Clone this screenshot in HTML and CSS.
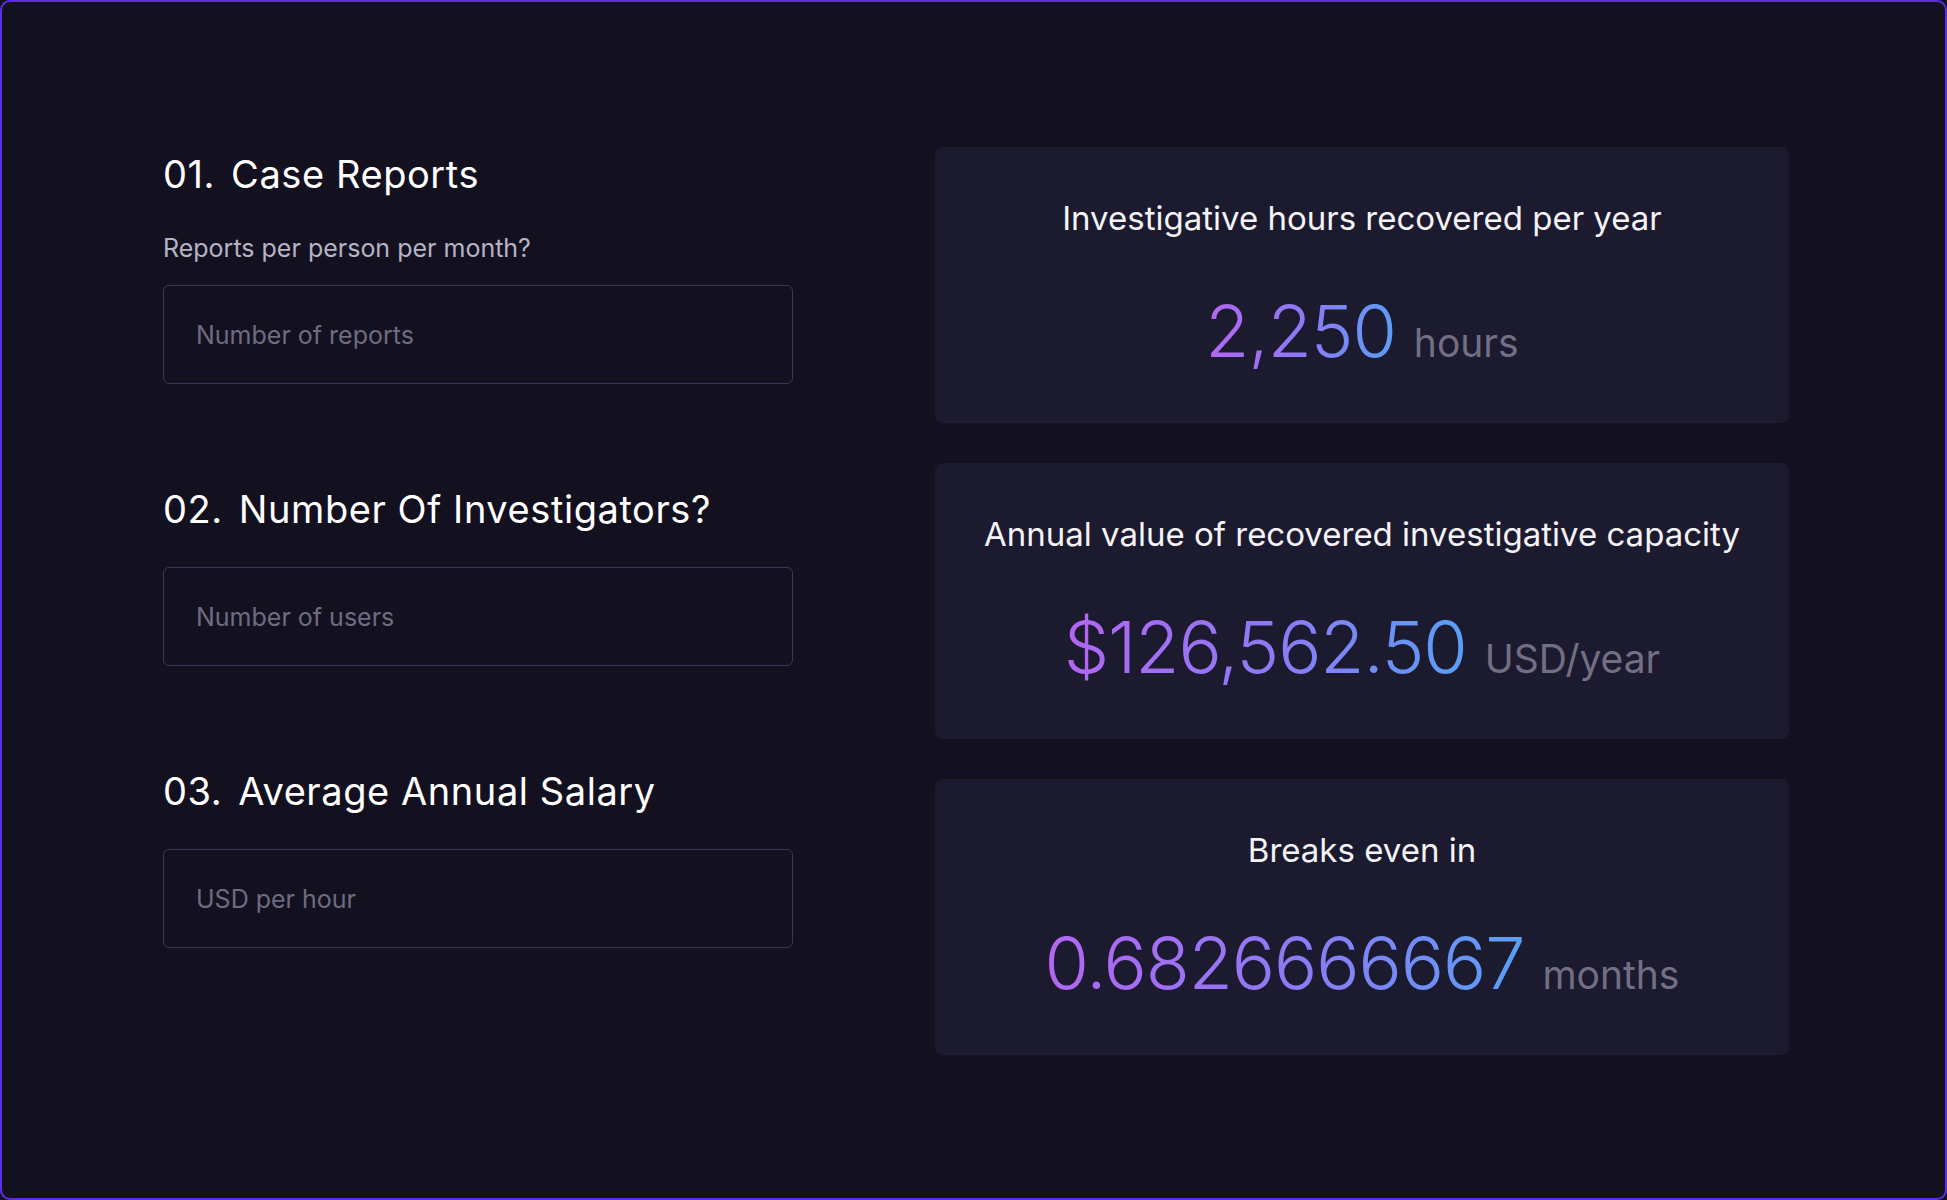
FILE: index.html
```html
<!DOCTYPE html>
<html lang="en">
<head>
    <meta charset="UTF-8">
    <meta name="viewport" content="width=device-width, initial-scale=1.0">
    <title>ROI Calculator</title>
    <link rel="stylesheet" href="styles.css">
</head>
<body>
    <div class="frame">
        <div class="calculator">
            <div class="inputs">
                <div class="field">
                    <h2 class="field-title"><span class="num">01.</span>Case Reports</h2>
                    <p class="field-hint">Reports per person per month?</p>
                    <input type="text" class="field-input" placeholder="Number of reports">
                </div>
                <div class="field">
                    <h2 class="field-title"><span class="num">02.</span>Number Of Investigators?</h2>
                    <input type="text" class="field-input" placeholder="Number of users">
                </div>
                <div class="field">
                    <h2 class="field-title"><span class="num">03.</span>Average Annual Salary</h2>
                    <input type="text" class="field-input" placeholder="USD per hour">
                </div>
            </div>

            <div class="results">
                <div class="card">
                    <p class="card-title">Investigative hours recovered per year</p>
                    <p class="card-value"><span class="amount">2,250</span><span class="unit">hours</span></p>
                </div>
                <div class="card">
                    <p class="card-title">Annual value of recovered investigative capacity</p>
                    <p class="card-value"><span class="amount">$126,562.50</span><span class="unit">USD/year</span></p>
                </div>
                <div class="card">
                    <p class="card-title">Breaks even in</p>
                    <p class="card-value"><span class="amount">0.6826666667</span><span class="unit">months</span></p>
                </div>
            </div>
        </div>
    </div>
</body>
</html>
```

FILE: styles.css
```css
* {
    box-sizing: border-box;
}

html, body {
    margin: 0;
    padding: 0;
    background-color: #13111f;
}

body {
    font-family: Inter, "Noto Sans", Arial, sans-serif;
    color: #ffffff;
}

.frame {
    width: 100vw;
    height: 100vh;
    border: 2px solid #5a2fe6;
    border-radius: 10px;
    background-color: #13111f;
    overflow: hidden;
}

.calculator {
    display: grid;
    grid-template-columns: 630px 854px;
    column-gap: 142px;
    padding: 145px 0 0 161px;
}

.inputs {
    display: flex;
    flex-direction: column;
    gap: 102px;
    padding-top: 4px;
}

.field-title {
    margin: 0 0 35px;
    font-size: 38px;
    font-weight: 400;
    line-height: 46px;
    letter-spacing: 0.015em;
    color: #ffffff;
}

.field-title .num {
    margin-right: 16px;
}

.field-hint {
    margin: 0 0 21px;
    font-size: 25px;
    line-height: 32px;
    color: #b6b3c4;
}

.field-input {
    display: block;
    width: 100%;
    height: 99px;
    padding: 0 32px;
    background-color: transparent;
    border: 1px solid #3b3757;
    border-radius: 6px;
    font-family: inherit;
    font-size: 25px;
    color: #ffffff;
    outline: none;
}

.field-input::placeholder {
    color: #6f6b82;
}

.results {
    display: flex;
    flex-direction: column;
    gap: 40px;
}

.card {
    height: 276px;
    padding-top: 50px;
    background-color: #1c1a2e;
    border-radius: 8px;
    text-align: center;
}

.card-title {
    margin: 0;
    font-size: 33px;
    line-height: 42px;
    color: #f4f3f8;
}

.card-value {
    margin: 48px 0 0;
    display: flex;
    justify-content: center;
    align-items: baseline;
}

.amount {
    font-size: 72px;
    font-weight: 300;
    line-height: 88px;
    letter-spacing: -0.015em;
    background: linear-gradient(90deg, #b266f2 0%, #8a7cf6 55%, #57a0f6 100%);
    -webkit-background-clip: text;
    background-clip: text;
    color: transparent;
    padding-right: 4px;
}

.unit {
    margin-left: 14px;
    font-size: 39px;
    color: #726f84;
}
```
